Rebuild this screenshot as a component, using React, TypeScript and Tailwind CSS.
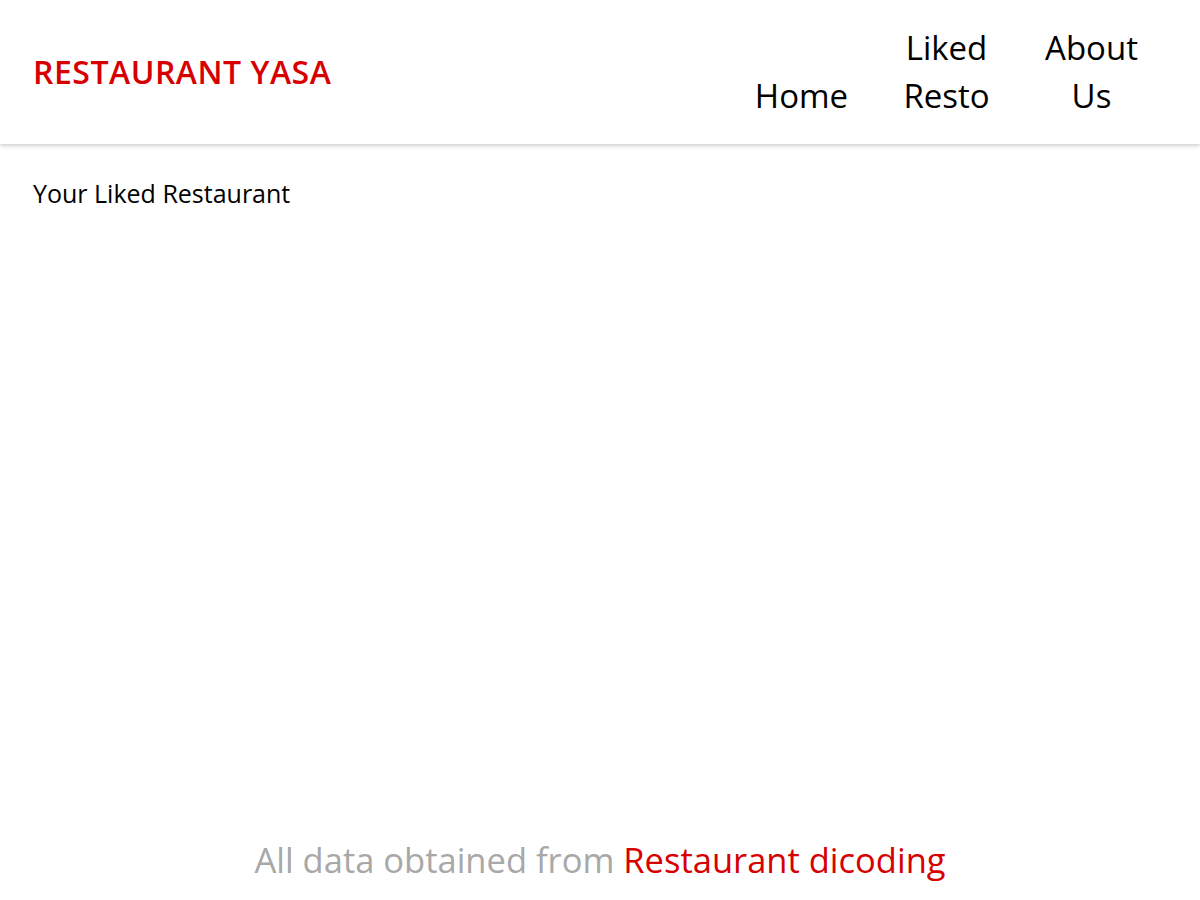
import React from 'react'

const navItems = ['Home', 'Liked Resto', 'About Us']

export default function App() {
  return (
    <div className="min-h-screen flex flex-col bg-white text-black" style={{ fontFamily: '"Open Sans", "Noto Sans", sans-serif' }}>
      {/* header */}
      <header className="h-[144px] flex items-center justify-between pl-[33px] pr-[36px] shadow-[0_2px_4px_rgba(0,0,0,0.18)]">
        <a className="text-[32px] font-semibold text-[#d70000] tracking-[0.5px]">RESTAURANT YASA</a>
        <nav>
          <ul className="flex items-end">
            {navItems.map(item => (
              <li key={item} className="w-[145px] text-center text-[33px] leading-[48px] px-[20px]">
                {item}
              </li>
            ))}
          </ul>
        </nav>
      </header>

      <main className="flex-1 px-[33px] pt-[33px]">
        <h2 className="text-[25px] leading-[32px]">Your Liked Restaurant</h2>
      </main>

      <footer className="h-[80px] flex items-center justify-center text-[34.5px]">
        <p>
          <span className="text-[#a8a8a8]">All data obtained from </span>
          <span className="text-[#d70000]">Restaurant dicoding</span>
        </p>
      </footer>
    </div>
  )
}
